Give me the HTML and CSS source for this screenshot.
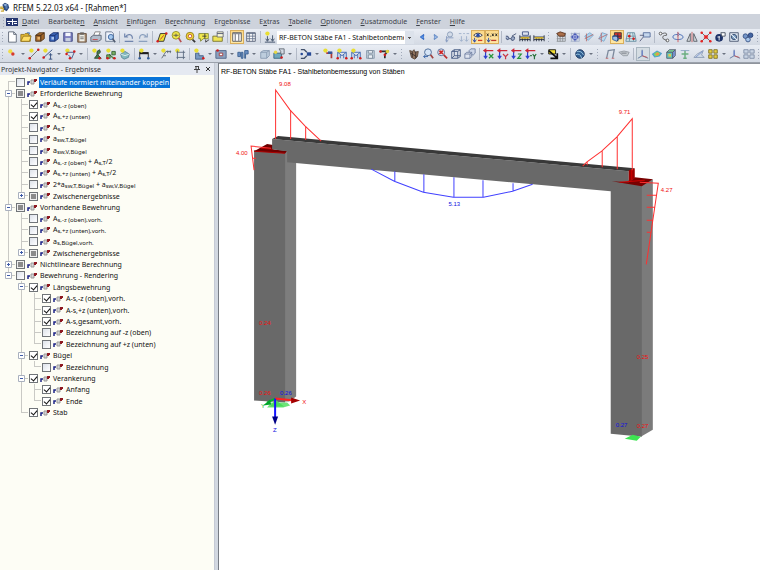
FILE: index.html
```html
<!DOCTYPE html>
<html lang="de">
<head>
<meta charset="utf-8">
<title>RFEM 5.22.03 x64 - [Rahmen*]</title>
<link rel="stylesheet" href="styles.css">
</head>
<body>
<div class="app">
  <header class="titlebar">
    <svg class="logo" viewBox="0 0 12 12" aria-hidden="true"><path d="M3 3 6 1 10 3 11 7 8 11 4 9Z" fill="#2c4a7c"/><path d="M4 3 7 2 9 4 6 5Z" fill="#8fb0dc"/><path d="M6 5 9 4 9 8 7 9Z" fill="#5579b0"/><path d="M4 6H1V8H4V11H1" fill="none" stroke="#c9a83a" stroke-width="1.500"/></svg>
    <h1>RFEM 5.22.03 x64 - [Rahmen*]</h1>
  </header>
  <nav class="menubar">
    <span class="grip"></span>
    <svg class="doc" viewBox="0 0 12 10" aria-hidden="true"><path d="M0 1H12V9H0Z" fill="#24356f"/><path d="M1 4.500H11M6.500 2V8M2 6.500H4M8 6.500H11" stroke="#fff"/></svg>
    <a href="#"><u>D</u>atei</a><a href="#">Bearbeite<u>n</u></a><a href="#"><u>A</u>nsicht</a><a href="#"><u>E</u>infügen</a><a href="#">Be<u>r</u>echnung</a><a href="#">Er<u>g</u>ebnisse</a><a href="#">E<u>x</u>tras</a><a href="#"><u>T</u>abelle</a><a href="#"><u>O</u>ptionen</a><a href="#"><u>Z</u>usatzmodule</a><a href="#"><u>F</u>enster</a><a href="#"><u>H</u>ilfe</a>
  </nav>
  <div class="toolbar">
    <div class="tools" data-tools="| new open block cube save clip print preview / undo redo / para lens gear pick folder / table! grid / newcase"></div>
    <select class="case" aria-label="Lastfall"><option>RF-BETON Stäbe FA1 - Stahlbetonbemessung von Stäben</option></select>
    <div class="tools" data-tools="prev next result values eye! xxx! / glasses hall hall2 | handgrid snap plane plane2 redplane! mesh note / curve rotate mirror cross info camera cubes |"></div>
  </div>
  <div class="toolbar last">
    <div class="tools" data-tools="| node v line dimline v polyline v / man people solid / beam v ruler frame / surf v opening v column v volume boxes v / release v support truss truss2 save2 connect v | hand zoomq zoomx box3 box3b / axx axy axz axmy v contrast v / globe v | rframe gray / axis! rainbow rcube cactus slope yellow4 v axis2 blocks |"></div>
  </div>
  <main class="work">
    <aside class="navigator">
      <div class="panelhead"><h2>Projekt-Navigator - Ergebnisse</h2>
        <button type="button" aria-label="Anheften"><svg viewBox="0 0 8 8"><path d="M2 1.500H6M3 1V4M5.500 1V4M1 4.500H7M4 5V8" stroke="#444" fill="none"/></svg></button>
        <button type="button" aria-label="Schließen"><svg viewBox="0 0 8 8"><path d="M2 2 6 6M6 2 2 6" stroke="#333" fill="none"/></svg></button>
      </div>
      <ul class="tree" id="tree"></ul>
    </aside>
    <section class="view">
      <h2>RF-BETON Stäbe FA1 - Stahlbetonbemessung von Stäben</h2>
      <svg class="model" viewBox="220 78 540 492" role="img" aria-label="Rahmenmodell mit Bewehrung">
        <path d="M284 151H297V396L290 401H284Z" fill="#7d7d7d"/>
        <path d="M255 150H286V402L255 400Z" fill="#696969"/>
        <path d="M255 151 268 144 274 145V149L288 151 286 153Z" fill="#6f0000"/>
        <path d="M262 148 274 149M255 151 286 153" stroke="#b00000"/>
        <path d="M640 184 653 179V429L641 436Z" fill="#7b7b7b"/>
        <path d="M611 180H642V436L611 433Z" fill="#696969"/>
        <path d="M273 139 629 171V183L611 191 288 162V151L273 149Z" fill="#696969"/>
        <path d="M273 139 279 136 635 168 629 171Z" fill="#393939"/>
        <path d="M612 181 629 182 635 177 653 179 642 186Z" fill="#780000"/>
        <path d="M629 170 635 168V178L629 182Z" fill="#9c0000"/>
        <path d="M632 169V180M620 182 645 180" stroke="#d00000"/>
        <g class="red">
          <path d="M276.500 139V90L291 110 306 126 322 141M291.500 139V110M306.500 140V126"/>
          <path d="M272 148 252 146 255 170M254 158H257"/>
          <path d="M632.500 170V118.500L617 137 602 151 587 162 583 166M617.500 169V137M602.500 167V151M587.500 165V162"/>
          <path d="M640 182 658.500 183 646.500 264M647 195H657M647 207H655M647 220H653M647 232H651"/>
        </g>
        <path class="blue" d="M372 169 395 181 424 192 454 197 484 197 513 191 533 184M395.500 171V181M424.500 174V192M454.500 177V197M483.500 180V197M513.500 183V191"/>
        <path d="M276 399 271 406H285Z" fill="#57dc67"/><path d="M272 402H288L291 405 284 407H268Z" fill="#47dd58" opacity=".8"/>
        <path d="M276 398 268 402" stroke="#00b92a" stroke-width="2"/><path d="M271 399 264 405 272 404Z" fill="#00a528"/>
        <path d="M276 398 295 400" stroke="#f22" stroke-width="2"/><path d="M292 397 301 400 292 403Z" fill="#a40000"/>
        <path d="M276 398V418" stroke="#1414ff" stroke-width="2"/><path d="M273 416H279L276 424Z" fill="#000084"/>
        <path d="M633 434 625 438 637 440 641 436Z" fill="#3ee552"/>
        <g class="num redtext"><text x="280" y="86">9.08</text><text x="237" y="155">4.00</text><text x="619" y="114">9.71</text><text x="661" y="192">4.27</text><text x="260" y="325">0.24</text><text x="260" y="394">0.26</text><text x="637" y="358">0.25</text><text x="637" y="427">0.27</text><text x="303" y="403">X</text></g>
        <g class="num bluetext"><text x="449" y="206">5.13</text><text x="281" y="394">0.26</text><text x="616" y="426">0.27</text><text x="274" y="431">Z</text></g>
        <g class="num greentext"><text x="262" y="407">Y</text></g>
      </svg>
    </section>
  </main>
</div>
<script src="app.js"></script>
</body>
</html>
```
FILE: styles.css
```css
* { box-sizing: border-box; }
body { margin: 0; background: #fff; font: 7px/11px "Noto Sans", "Open Sans", sans-serif; color: #111; }
h1, h2 { margin: 0; font-size: inherit; font-weight: 400; }
button { border: 0; padding: 0; background: none; }
svg { display: block; }

.app { display: flex; flex-direction: column; min-height: 100vh; overflow: hidden; }
.titlebar { display: flex; align-items: center; gap: 3px; height: 14px; background: #fff; }
.titlebar h1 { font-size: 8px; }
.logo { width: 10px; height: 12px; }
.menubar { display: flex; align-items: center; height: 15px; padding-left: 1px; background: #ced3dc; white-space: nowrap; }
.menubar a { margin-right: 9px; color: #3c4149; text-decoration: none; }
.menubar u { text-underline-offset: 1px; }
.doc { flex: none; width: 12px; height: 10px; margin: 0 4px 0 0; }

.toolbar { display: flex; align-items: center; height: 16px; background: linear-gradient(#e9edf4, #d3d9e3); overflow: hidden; }
.toolbar.last { height: 17px; }
.tools { display: flex; align-items: center; flex: none; }
.tool { flex: none; width: 14px; height: 14px; }
.tool svg { width: 12px; height: 12px; margin: 1px; }
.tool.on { background: linear-gradient(#fbd787, #ffe9a8); box-shadow: inset 0 0 0 1px #d9ae5c; }
.tool.soft { background: #d5dde3; box-shadow: inset 0 0 0 1px #a9b6c0; }
.arrow { flex: none; width: 8px; height: 14px; }
.arrow::before { content: ""; display: block; width: 0; margin: 6px auto; border: 2px solid transparent; border-top-color: #6b7280; border-bottom: 0; }
.sep { flex: none; width: 5px; height: 12px; background: linear-gradient(#b3bac7, #b3bac7) 2px 0 / 1px 12px no-repeat; }
.grip { flex: none; width: 5px; height: 10px; background: repeating-linear-gradient(#a2aaba 0 1px, transparent 1px 3px) 2px 0 / 1px 10px no-repeat; }
.tools > .grip:not(:first-child) { width: 8px; }
.case { appearance: none; flex: none; width: 137px; height: 13px; margin-right: 1px; padding: 0 10px 0 2px; border: 0; border-radius: 0; font: inherit; color: #111; background: linear-gradient(#555, #555) 131px 6px / 3px 1px no-repeat, linear-gradient(#555, #555) 132px 7px / 1px 1px no-repeat, linear-gradient(#dce2eb, #dce2eb) 128px 0 / 9px 13px no-repeat, #fff; }

.work { display: flex; flex: 1; border-top: 1px solid #9ba1ab; background: #d2d8e1; }
.navigator { flex: none; width: 215px; background: #fdfdf5; border-right: 1px solid #c5cad5; }
.panelhead { display: flex; align-items: center; gap: 3px; height: 12px; padding: 0 2px 0 1px; background: #e5e9f1; color: #333; }
.panelhead h2 { flex: 1; }
.panelhead svg { width: 8px; height: 8px; }
.tree { list-style: none; margin: 0; padding: 1px 0 0 2px; }
.row { display: flex; align-items: center; height: 11px; white-space: nowrap; }
.row:nth-child(5n+1), .row:nth-child(5n+4) { height: 12px; }
.guide { position: relative; flex: none; align-self: stretch; width: 13px; }
.guide::before, .guide.t::after, .guide.e::after, .guide.f::after { content: ""; position: absolute; left: 6px; background: #c9c9c5; }
.guide::before { top: 0; bottom: 0; width: 1px; }
.guide.t::after, .guide.e::after, .guide.f::after { top: 5px; width: 7px; height: 1px; }
.guide.e::before { bottom: 6px; }
.guide.f::before { top: 6px; }
.guide.n::before { display: none; }
.toggle { position: absolute; z-index: 1; left: 3px; top: 2px; width: 7px; height: 7px; }
.toggle svg { width: 7px; height: 7px; }
.row label { display: flex; align-items: center; gap: 2px; padding-left: 1px; }
.row input { appearance: none; position: relative; flex: none; width: 9px; height: 9px; margin: 0; border: 1px solid #717579; background: linear-gradient(135deg, #dde2ea, #fff); }
.row input:checked { background: #fff; }
.row input:checked::before { content: ""; position: absolute; left: 2px; top: 0; width: 3px; height: 5px; border: solid #111; border-width: 0 1px 1px 0; transform: rotate(40deg); }
.row input:indeterminate { background: #8b8b8b; box-shadow: inset 0 0 0 1px #f0f0f0; }
.row label svg { flex: none; width: 10px; height: 8px; }
.row .text { padding: 0 1px; line-height: 11px; }
.row small { position: relative; top: 1px; font-size: 6px; }
.row.selected .text { background: #0874d8; color: #fff; }

.view { flex: 1; min-width: 0; margin-left: 4px; background: #fff; border-top: 1px solid #8f949c; box-shadow: -1px 0 #777c84; font-family: "Liberation Sans", Arial, sans-serif; }
.view h2 { padding: 2px 2px 0; height: 14px; color: #000; }
.model { width: 100%; }
.red, .blue { fill: none; stroke: #ff3030; stroke-width: 1px; }
.blue { stroke: #4040ff; }
.num { font-size: 6px; }
.redtext { fill: #f01010; }
.bluetext { fill: #1010e0; }
.greentext { fill: #10c020; }
```
FILE: app.js
```js
const P = (d, stroke, fill = 'none', w = 1) => `<path d="${d}" stroke="${stroke || 'none'}" fill="${fill}" stroke-width="${w}"/>`;
const C = (x, y, r, fill, stroke = 'none') => `<circle cx="${x}" cy="${y}" r="${r}" fill="${fill}" stroke="${stroke}"/>`;
const star = C(4, 3, 2.5, '#e9df34');
const dots = (pts, c = '#d21d1d') => pts.map(([x, y]) => C(x, y, 1.5, c)).join('');
const gridLines = c => P('M2 3H12M2 6H12M2 9H12M2 12H12M3 2V12M6 2V12M9 2V12M12 2V12', c);
const box = (a, b, c) => P('M2 5 5 2H12L9 5Z', '#555c70', a) + P('M2 5H9V12H2Z', '#555c70', b) + P('M9 5 12 2V9L9 12Z', '#555c70', c);
const hall = P('M1 12V5M13 12V5M1 7H13M1 10H13M4 7V12M7 7V12M10 7V12', '#222a3c') + P('M2 8H12', '#c8a82c', 'none', 2);
const truss = P('M2 12V5H12V12M2 5 7 9 12 5M5 12V8M9 12V8', '#3762ad') + dots([[2, 12], [12, 12]]);
const ax = (c, glyph) => P('M3 12V4M1 9 3 12 5 9', '#2b3ed0', 'none', 1.4) + P('M1 3H12M4 1 1 3 4 5', '#cc2636', 'none', 1.4) + P(glyph, c, 'none', 1.4);
const triad = P('M6 2V9L1 12M6 9 13 12', '#59719b') + P('M6 9 12 11', '#c95757') + P('M6 9V3', '#5873cf');

const icons = {
  new: P('M3 1H9L12 4V13H3Z', '#596273', '#fff') + P('M9 1V4H12', '#596273'),
  open: P('M1 4H5L6 3H10V5H12V12H1Z', '#927422', '#e3b931') + P('M1 12 4 6H13L11 12Z', '#927422', '#ffdf66') + P('M8 2H11V4', '#3f74b8'),
  block: P('M2 5 6 2H12V9L8 12H2Z', '#523617', '#a5692c') + P('M2 5H8L12 2M8 5V12', '#3b2818') + P('M4 7H7V10H4Z', null, '#e9b56c'),
  cube: P('M2 5 6 2H12V9L8 12H2Z', '#152d69', '#3f69bd') + P('M2 5H8L12 2M8 5V12', '#152d69') + P('M4 7H7V10H4Z', null, '#a8c3ee'),
  save: P('M2 2H12V12H2Z', '#414b83', '#7779bd') + P('M4 2H10V6H4Z', null, '#f4f6fc') + P('M4 8H10V12H4Z', null, '#c8d0df'),
  clip: P('M2 3H12V13H2Z', '#634b39', '#a98c70') + P('M4 4H10V12H4Z', null, '#f0f0e9') + P('M5 2H9V4H5ZM5 7H9M5 9H9', '#676767'),
  print: P('M4 6 6 1H12L10 6Z', '#777', '#fff') + P('M1 7 4 5H13V10L10 12H1Z', '#596270', '#b2bdcc') + P('M3 10H9', '#c93d3d'),
  preview: P('M2 1H9L11 3V12H2Z', '#647188', '#eef3fc') + C(8, 7, 3, '#a4c8ed', '#335f9c') + P('M10 9 13 13', '#515d71', 'none', 2),
  undo: P('M2 3V7H6M3 7C5 3 11 3 11 9M2 12H12', '#7085ad', 'none', 1.4),
  redo: P('M12 3V7H8M11 7C9 3 3 3 3 9M2 12H12', '#8ba0be', 'none', 1.4),
  para: P('M2 12 5 3H12L9 12Z', '#242424', '#f2e234') + P('M5 10 9 5', '#c02c2c') + dots([[2, 12], [12, 3]]),
  lens: C(7, 5, 4.5, '#efe548', '#8e8a25') + P('M4 5H10M7 3V7', '#555') + P('M10 8 13 13', '#b85050', 'none', 2),
  gear: C(7, 6, 4.5, '#f1dc37', '#91761e') + C(7, 6, 2, '#fff', '#be4840') + P('M10 10 13 13', '#353535', 'none', 2),
  pick: P('M1 3H12V9H6L3 12V9H1Z', '#7f8631', '#f2e94f') + P('M5 6H10M8 3V9M9 10V13L13 10', '#333'),
  folder: P('M1 6H12V12H1Z', '#777027', '#eee457') + P('M6 1H13V7H6Z', '#686b70', '#f8f8d7') + P('M6 3H13', '#454c6c'),
  table: P('M2 2H12V12H2Z', '#4c4e53', '#fff') + P('M2 3H12M5 2V12M9 2V12', '#8a8c94', 'none', 1.5),
  grid: P('M2 2H12V12H2Z', '#4c576e', '#fff') + P('M2 3H12M2 6H12M2 9H12M5 2V12M9 2V12', '#62708a'),
  newcase: star + P('M4 6V11M2 9 4 12 6 9M10 5V11M8 9 10 12 12 9M1 13H13', '#354661'),
  prev: P('M9 4 5 7 9 10V8L8 7 9 6Z', '#1e5ac0', '#5a94e5'),
  next: P('M5 4 9 7 5 10V8L6 7 5 6Z', '#5580be', '#9ebdea'),
  result: C(7, 4, 3, '#d3dce9', '#8799b4') + P('M3 8H11M3 6V12M2 10 3 13 5 10', '#8197bd'),
  values: P('M1 3H4M6 3H8M10 3H13M4 6V12M10 6V12M2 10 4 12 6 10M8 10 10 12 12 10', '#9caec9'),
  eye: P('M2 5Q7 0 12 5Q7 9 2 5Z', '#292f48', '#fff') + C(7, 5, 2, '#254ba8') + P('M3 8V13M1 10 3 13 5 10', '#1e43b0') + P('M7 11H12', '#d13b25', 'none', 1.5),
  xxx: P('M1 3 3 6M3 3 1 6M5 6H6M7 3 9 6M9 3 7 6M11 3 13 6M13 3 11 6', '#202020') + P('M3 8V13M1 10 3 13 5 10', '#2447a3') + P('M6 11H12', '#bd352c', 'none', 1.5),
  glasses: P('M1 6Q4 5 5 9Q2 12 1 8M7 9Q8 5 11 7Q12 11 8 11ZM8 6 13 3M5 9H7', '#3e4d70', '#9dacc9'),
  hall: hall + P('M4 1H11V5H4Z', '#394c7f', '#dfe5f1'),
  hall2: hall,
  handgrid: gridLines('#8a8d91') + P('M2 3 6 1 12 3 11 6 5 6Z', '#5b3420', '#ab704b'),
  snap: gridLines('#a6b2cc') + C(7, 7, 3, '#eef2ff', '#3749b0') + P('M7 2V12M2 7H12', '#3749b0'),
  plane: P('M2 6 8 2 12 5 6 11Z', '#7ca9cf', '#acd4ef') + P('M2 9 12 4M4 3V12', '#b76969'),
  plane2: P('M6 2 12 4 8 12 2 9Z', '#7ba6cb', '#b9dbef') + P('M2 9 12 4M5 2V13', '#b56a70'),
  redplane: P('M4 2H12V9H4Z', '#343434', '#d93229') + P('M2 6 6 5 9 9 7 12 2 10Z', '#245aa2', '#9bbde8') + P('M2 6H12M8 3V12', '#1c2c57'),
  mesh: P('M3 2H11L13 12H1Z', '#628a9d', '#d8ecef') + P('M2 6H12M1 9H13M6 2 5 12M9 2 10 12', '#6c92a8') + dots([[5, 6], [10, 9]]),
  note: P('M5 2H13V7H5Z', '#526a99', '#c5d7ed') + P('M1 5H6M5 7 1 12', '#535a78'),
  curve: C(3, 3, 1.6, '#fff', '#4c4c4c') + C(11, 11, 1.6, '#fff', '#4c4c4c') + P('M5 3Q11 1 10 5Q4 5 6 9L10 11', '#555'),
  rotate: P('M9 4Q13 5 13 7C13 11 1 11 1 7Q1 4 7 4M6 2 9 4 6 6', '#4168b3') + P('M7 1V13', '#d05353'),
  mirror: P('M5 3 1 12H5ZM9 3 13 12H9Z', '#535a62', '#d9dde1') + P('M7 1V13', '#be5050'),
  cross: P('M2 2 12 12M12 2 2 12', '#555b62') + dots([[2, 2], [12, 2], [2, 12], [12, 12]], '#e52424') + P('M5 5 9 9M9 5 5 9', '#e52424', 'none', 2),
  info: C(6, 8, 4.5, '#1e3369') + P('M6 6V11M4 7H7', '#fff') + P('M8 2H13V6H9Z', '#3c4656', '#fff'),
  camera: P('M2 2H12V12H2Z', '#45536c', '#dbe4ef') + C(7, 7, 3, '#88a9cb', '#263c61') + P('M4 4 10 10', '#fff'),
  cubes: C(4, 6, 2.7, '#7496c9', '#354f82') + C(10, 5, 2.7, '#4264a1', '#243d74') + C(7, 10, 2.7, '#a7c5ea', '#354f82'),
  node: C(5, 4, 2.5, '#f0dd48') + C(8, 7, 2, '#d83a2a'),
  line: star + P('M2 12 12 2', '#656565') + dots([[2, 12], [12, 2]]),
  dimline: star + P('M1 12 12 2M8 8H12M10 6V13M8 13H12', '#2c477a') + dots([[2, 11]]),
  polyline: star + P('M3 5H12L9 12 5 8', '#3e5184') + dots([[3, 7], [12, 4], [7, 12]]),
  man: P('M7 4 10 2 11 5 8 8 12 12H4L7 8Z', '#314632', '#467a4d') + star + dots([[10, 12]]),
  people: P('M2 8H6V12H2ZM8 4H12V8H8ZM5 7 9 12H12', '#315d32', '#7baf63') + star + dots([[3, 12], [11, 12]]),
  solid: P('M2 7 7 4 12 7 11 11 6 13 3 11Z', '#5d8698', '#84b9be') + P('M2 7 7 9 12 7', '#e0f0f0') + star,
  beam: P('M2 4V11M12 5V11', '#1d1d1d') + P('M2 6H12', '#1d1d1d', 'none', 2.5) + star + dots([[2, 12], [12, 12]], '#315c97'),
  ruler: star + P('M2 12 7 4H13M4 9H7M9 6V3M12 6V3', '#59656f'),
  frame: star + P('M3 5H13M3 11H13M4 3V13M11 3V13', '#59687d'),
  surf: P('M3 6H7V9H12V13H3Z', '#415d83', '#7899c2') + star + dots([[12, 12]]),
  opening: P('M1 3H13V12H1Z', '#4d6386', '#8ba1bf') + P('M5 6H9V9H5Z', '#a23333', '#fff') + dots([[3, 3]]),
  column: P('M1 5H4V10H1ZM5 5H7V12H5ZM9 3H13V7H10V12H9Z', '#375e8e', '#6c91c5'),
  volume: P('M2 5 5 3H12V9L9 12H2Z', '#8699b1', '#bdcddd') + P('M2 5H9V12M9 5 12 3', '#8699b1'),
  boxes: P('M1 6H10V12H1Z', '#3b647e', '#6fa8bd') + P('M7 1H13V7H9V4Z', '#5d656f', '#d4dae4') + C(3, 5, 2, '#e5d747') + dots([[10, 11]]),
  release: P('M1 2H5L8 5M1 12H5L8 9', '#41506b', 'none', 1.5) + P('M8 5H13V9H8Z', null, '#264994') + dots([[2, 7]], '#264994'),
  support: star + P('M5 6H11V12', '#b33a34', 'none', 2) + P('M7 4H12V7H7Z', null, '#365694'),
  truss: truss + star,
  truss2: truss + star,
  save2: P('M3 3H12V12H3Z', '#8898a9', '#c4d2de') + P('M5 3H10V6H5ZM5 8H10V12H5Z', '#789', '#edf2f7'),
  connect: P('M2 4H11L8 8V12', '#2d2d2d', 'none', 2) + dots([[3, 4], [8, 8]]) + C(11, 4, 2, '#e1cf38'),
  hand: P('M2 3 5 4 7 2 8 5 12 4 11 10 8 13 4 11Z', '#574537', '#90725c') + P('M3 6 10 10M5 4V11M9 4V12', '#382f2b'),
  zoomq: C(7, 5, 4, '#d6e5f6', '#446390') + P('M10 8 13 12', '#a14444', 'none', 2) + P('M2 10H7M4 8 2 10 4 12', '#2658a3'),
  zoomx: C(6, 5, 4, '#e1e8f2', '#526793') + P('M4 3 8 7M8 3 4 7', '#d02525', 'none', 2) + P('M9 8 13 12', '#ba3030', 'none', 2),
  box3: P('M2 4 5 2H12V10L9 12H2ZM2 4H9V12M9 4 12 2M5 2V9L2 12M5 9H12', '#40557f'),
  box3b: P('M6 3 8 1H13V6L11 8H6Z', '#6d7da0', '#cdd6e8') + P('M1 7 3 5H9V10L7 12H1ZM1 7H7V12M7 7 9 5', '#6d7da0', '#dfe5f0'),
  axx: ax('#28963a', 'M7 7 12 12M12 7 7 12'),
  axy: ax('#ca3542', 'M7 7 10 10 13 7M10 10V13'),
  axz: ax('#28963a', 'M8 7H12L8 12H12'),
  axmy: ax('#29723b', 'M6 9H8M9 7 11 10 13 7M11 10V13'),
  contrast: P('M2 2H10V7H2Z', '#121212', '#f1dd32') + P('M2 3 11 11M4 12H12V6', '#111', 'none', 2),
  globe: C(7, 7, 5, '#315f91', '#1e365c') + P('M3 4Q9 3 11 8M2 8Q7 5 9 12', '#a9d3ea'),
  rframe: P('M3 12 5 3 12 2 10 12', '#7c899c', 'none', 1.5) + P('M2 12H5M9 12H12', '#ca6868'),
  gray: P('M1 5Q7 2 13 5L11 9H6Z', '#9299a2', '#c6cbd0') + P('M4 6H10', '#717780'),
  axis: triad, axis2: triad,
  rainbow: P('M1 7 7 3 13 6 10 10 4 11Z', null, '#4e9ed1') + P('M3 7 7 4 11 6 9 9 5 10Z', null, '#7fd762') + P('M5 7 8 5 10 7 7 9Z', null, '#ef9548'),
  rcube: box('#7bd399', '#62c5b6', '#7b9add') + P('M4 7H7V10H4Z', null, '#e9c44d'),
  cactus: P('M7 12V3M3 7H11M5 12H9', '#6bae80', 'none', 1.7) + P('M2 3H12', '#8aa2c1'),
  slope: P('M1 11 5 7 12 3 10 8 13 11Z', '#8999b2', '#d1dce8') + P('M3 11 11 4', '#7890cd'),
  yellow4: [[2, 2], [8, 2], [2, 8], [8, 8]].map(([x, y]) => P(`M${x} ${y}H${x + 4}V${y + 4}H${x}Z`, '#7b6d22', '#e7cf40')).join(''),
  blocks: [[1, 2], [8, 2], [1, 8], [8, 8]].map(([x, y]) => P(`M${x} ${y}H${x + 5}V${y + 4}H${x}Z`, '#7c8ba5', '#cad5e4')).join('')
};

document.querySelectorAll('[data-tools]').forEach(bar => {
  bar.innerHTML = bar.dataset.tools.split(' ').map(name => {
    if (name === '|') return '<span class="grip"></span>';
    if (name === '/') return '<span class="sep"></span>';
    if (name === 'v') return '<button type="button" class="arrow" aria-label="Mehr"></button>';
    const on = name.endsWith('!');
    const key = name.replace('!', '');
    const cls = on ? (key === 'axis' ? ' soft' : ' on') : '';
    return `<button type="button" class="tool${cls}" aria-label="${key}"><svg viewBox="0 0 14 14">${icons[key]}</svg></button>`;
  }).join('');
});

// [level, check state (0 off, 1 on, 2 mixed), toggle sign, label]
const rows = [
  [0, 0, '', 'Verläufe normiert miteinander koppeln'],
  [0, 2, '-', 'Erforderliche Bewehrung'],
  [1, 1, '', 'A<small>s,-z (oben)</small>'],
  [1, 1, '', 'A<small>s,+z (unten)</small>'],
  [1, 0, '', 'A<small>s,T</small>'],
  [1, 0, '', 'a<small>sw,T,Bügel</small>'],
  [1, 0, '', 'a<small>sw,V,Bügel</small>'],
  [1, 0, '', 'A<small>s,-z (oben)</small> + A<small>s,T</small>/2'],
  [1, 0, '', 'A<small>s,+z (unten)</small> + A<small>s,T</small>/2'],
  [1, 0, '', '2*a<small>sw,T,Bügel</small> + a<small>sw,V,Bügel</small>'],
  [1, 2, '+', 'Zwischenergebnisse'],
  [0, 2, '-', 'Vorhandene Bewehrung'],
  [1, 0, '', 'A<small>s,-z (oben),vorh.</small>'],
  [1, 0, '', 'A<small>s,+z (unten),vorh.</small>'],
  [1, 0, '', 'a<small>s,Bügel,vorh.</small>'],
  [1, 2, '+', 'Zwischenergebnisse'],
  [0, 2, '+', 'Nichtlineare Berechnung'],
  [0, 0, '-', 'Bewehrung - Rendering'],
  [1, 1, '-', 'Längsbewehrung'],
  [2, 1, '', 'A-s,-z (oben),vorh.'],
  [2, 1, '', 'A-s,+z (unten),vorh.'],
  [2, 1, '', 'A-s,gesamt,vorh.'],
  [2, 0, '', 'Bezeichnung auf -z (oben)'],
  [2, 0, '', 'Bezeichnung auf +z (unten)'],
  [1, 1, '-', 'Bügel'],
  [2, 0, '', 'Bezeichnung'],
  [1, 1, '-', 'Verankerung'],
  [2, 1, '', 'Anfang'],
  [2, 1, '', 'Ende'],
  [1, 1, '', 'Stab']
];
const mark = '<svg viewBox="0 0 10 8" aria-hidden="true"><path d="M1 7V4H3" fill="none" stroke="#1d2387" stroke-width="1.500"/><path d="M4 2H7V6H4Z" fill="#d4d4d4" stroke="#999"/><path d="M8 4V2H10" fill="none" stroke="#8e1820" stroke-width="2"/></svg>';

// True when another row of the same level follows before the branch closes.
const continues = (i, level) => {
  for (let j = i + 1; j < rows.length; j++) {
    if (rows[j][0] < level) return false;
    if (rows[j][0] === level) return true;
  }
  return false;
};

const tree = document.getElementById('tree');
tree.innerHTML = rows.map(([level, state, sign, label], i) => {
  let guides = '';
  for (let l = 0; l < level; l++) guides += `<span class="guide ${continues(i, l) ? 'v' : 'n'}"></span>`;
  const kind = i === 0 ? 'f' : continues(i, level) ? 't' : 'e';
  const toggle = sign ? `<button type="button" class="toggle" aria-label="Zweig"><svg viewBox="0 0 7 7"><path d="M.5.5H6.500V6.500H.5Z" fill="#fff" stroke="#a9b0be"/><path d="M2 3.500H5${sign === '+' ? 'M3.500 2V5' : ''}" stroke="#3d5aa8"/></svg></button>` : '';
  guides += `<span class="guide ${kind}">${toggle}</span>`;
  return `<li class="row${i === 0 ? ' selected' : ''}">${guides}<label><input type="checkbox"${state === 1 ? ' checked' : ''}>${mark}<span class="text">${label}</span></label></li>`;
}).join('');
tree.querySelectorAll('input').forEach((box, i) => { box.indeterminate = rows[i][1] === 2; });
```
